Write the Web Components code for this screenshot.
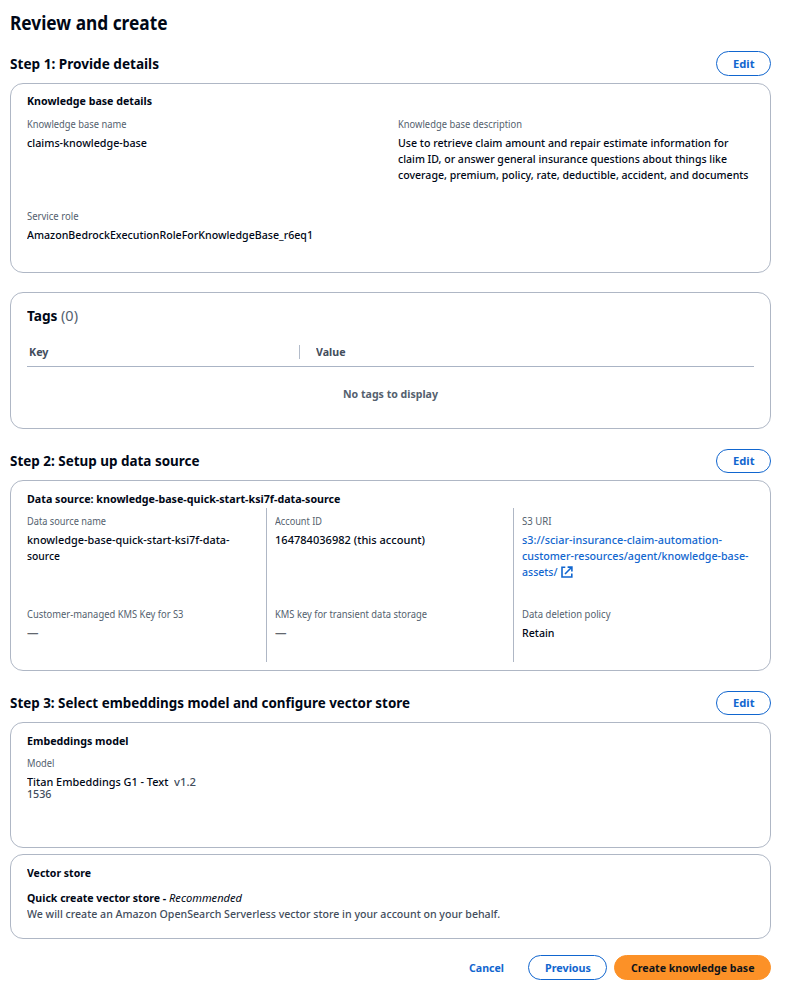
<!DOCTYPE html>
<html lang="en">
<head>
<meta charset="utf-8">
<title>Review and create</title>
<style>
body{margin:0;background:#fff;color:#000716;font-family:"Noto Sans","Open Sans",sans-serif;font-size:11.4px;line-height:16px}
</style>
</head>
<body>
<kb-review></kb-review>
<script>
// One line of text, condensed horizontally to span the width in "w".
customElements.define('kb-t', class extends HTMLElement{
  connectedCallback(){
    if(this.shadowRoot) return;
    this.attachShadow({mode:'open'}).innerHTML='<style>:host{display:inline-block;white-space:pre;text-align:left}span{display:inline-block;transform-origin:0 50%}</style><span><slot></slot></span>';
    const w=parseFloat(this.getAttribute('w'));
    if(w){
      const s=this.shadowRoot.querySelector('span'), natural=s.getBoundingClientRect().width;
      this.style.width=w+'px';
      s.style.transform='scaleX('+(w/natural).toFixed(4)+')';
    }
  }
});
const define=(name,html)=>customElements.define(name,class extends HTMLElement{
  connectedCallback(){ if(!this.shadowRoot) this.attachShadow({mode:'open'}).innerHTML=html; }
});
define('kb-button',`<style>
:host{display:flex;align-items:center;justify-content:center;box-sizing:border-box;width:var(--w,55px);height:var(--h,24px);border:1.5px solid #1166cf;border-radius:13px;color:#1166cf;font-weight:700;flex:none}
:host([variant=primary]){background:#fc9127;border-color:#fc9127;color:#0f141a}
:host([variant=link]){border-color:transparent}
</style><slot></slot>`);
define('kb-step',`<style>
:host{display:flex;justify-content:space-between;align-items:flex-start}
h2{margin:0;font-size:14.6px;line-height:24px;font-weight:700}
</style><h2><slot></slot></h2><slot name="action"></slot>`);
define('kb-card',`<style>
:host{display:flex;flex-direction:column;box-sizing:border-box;border:1px solid #afb7c5;border-radius:13px;padding:10px 16px 0}
::slotted([slot=title]){font-weight:700;height:16px;line-height:16px}
</style><slot name="title"></slot><slot></slot>`);
define('kb-field',`<style>
:host{display:block}
.l{font-size:10px;line-height:12px;height:12px;color:#545f6e;margin-bottom:5px;font-weight:400}
.v{line-height:16px;font-weight:500}
::slotted(*){vertical-align:top}
</style><div class="l"><slot name="label"></slot></div><div class="v"><slot></slot></div>`);
define('kb-external',`<style>:host{display:inline-block;width:12px;height:12px;margin-left:3.5px;padding-top:2px}svg{display:block}</style>
<svg width="12" height="12" viewBox="0 0 12 12" fill="none" stroke="currentColor" stroke-width="1.6"><path d="M4.3 1.25H1V11H10.8V7.6M6.6 1.1H10.9V5.4M10.7 1.3L4 8"/></svg>`);
define('kb-tags',`<style>
:host{display:flex;flex-direction:column}
.t{font-size:14.6px;line-height:24px;font-weight:700;height:24px;margin-bottom:17px}
.t span{font-weight:400;color:#545f6e}
.h{display:grid;grid-template-columns:273px 1fr;border-bottom:1px solid #aab4c5;padding-bottom:6px;color:#424d5c;font-weight:700;height:16px}
.h div:first-child{border-right:1px solid #b3bcca;height:14px;margin-top:1px;padding-left:2px;line-height:14px}
.h div:last-child{padding-left:16px}
.e{margin-top:19px;text-align:center;font-weight:700;color:#545f6e}
</style>
<div class="t"><kb-t w="34">Tags </kb-t><span><kb-t w="17">(0)</kb-t></span></div>
<div class="h"><div><kb-t w="19.5">Key</kb-t></div><div><kb-t w="29.5">Value</kb-t></div></div>
<div class="e"><kb-t w="95">No tags to display</kb-t></div>`);
define('kb-review',`<style>
:host{display:flex;flex-direction:column;width:761px;padding:9px 0 0 10px}
h1{margin:0 0 14px;font-size:19px;line-height:28px;height:28px;font-weight:700}
kb-step{height:24px}
.c1{margin-top:8px;height:190px;padding-top:9px}
.c2{margin-top:19px;height:137px}
.s2{margin-top:19px}.c3{margin-top:8px;height:191px}
.s3{margin-top:19px}.c4{margin-top:8px;height:126px}
.s2 kb-button,.s3 kb-button{margin-top:1px}
.c5{margin-top:6px;height:85px}
.two{display:grid;grid-template-columns:371px 1fr;grid-template-rows:65px auto;row-gap:27px;margin-top:9px}
.three{display:grid;grid-template-columns:239px 247px 1fr;height:154px;margin-top:1px}
.col{display:flex;flex-direction:column;gap:28px;padding-top:7px;box-sizing:border-box}
.col+.col{border-left:1px solid #afb7c5;padding-left:8px}
.col kb-field:first-child{height:65px}
a{color:#1166cf;text-decoration:none;display:block}
a div{display:flex;height:16px}
.d{color:#62676e;font-weight:700}
.m{margin-top:8px}.m div{display:flex;line-height:12px;height:12px;color:#424d5c}.m div:nth-of-type(1){padding-top:2px}
.m b{font-weight:500;color:#000716}
.q{margin-top:9px;font-weight:500;color:#424d5c}.q b,.q i{color:#000716;font-weight:700}.q i{font-weight:400}
.q div{height:16px}
footer{display:flex;justify-content:flex-end;margin-top:16px;--h:25px}
</style>
<h1><kb-t w="157.5">Review and create</kb-t></h1>
<kb-step><kb-t w="149">Step 1: Provide details</kb-t><kb-button slot="action" style="--h:25px"><kb-t w="21.5">Edit</kb-t></kb-button></kb-step>
<kb-card class="c1"><div slot="title"><kb-t w="125">Knowledge base details</kb-t></div>
<div class="two">
<kb-field><kb-t slot="label" w="99.5">Knowledge base name</kb-t><kb-t w="120">claims-knowledge-base</kb-t></kb-field>
<kb-field><kb-t slot="label" w="124">Knowledge base description</kb-t><kb-t w="330.5">Use to retrieve claim amount and repair estimate information for</kb-t><br><kb-t w="329">claim ID, or answer general insurance questions about things like</kb-t><br><kb-t w="350.5">coverage, premium, policy, rate, deductible, accident, and documents</kb-t></kb-field>
<kb-field><kb-t slot="label" w="51.5">Service role</kb-t><kb-t w="286">AmazonBedrockExecutionRoleForKnowledgeBase_r6eq1</kb-t></kb-field>
</div></kb-card>
<kb-card class="c2"><kb-tags></kb-tags></kb-card>
<kb-step class="s2"><kb-t w="189.5">Step 2: Setup up data source</kb-t><kb-button slot="action"><kb-t w="21.5">Edit</kb-t></kb-button></kb-step>
<kb-card class="c3"><div slot="title"><kb-t w="313.5">Data source: knowledge-base-quick-start-ksi7f-data-source</kb-t></div>
<div class="three">
<div class="col"><kb-field><kb-t slot="label" w="79">Data source name</kb-t><kb-t w="202.5">knowledge-base-quick-start-ksi7f-data-</kb-t><br><kb-t w="33">source</kb-t></kb-field>
<kb-field><kb-t slot="label" w="156.5">Customer-managed KMS Key for S3</kb-t><kb-t class="d" w="11.5">—</kb-t></kb-field></div>
<div class="col"><kb-field><kb-t slot="label" w="47">Account ID</kb-t><kb-t w="150">164784036982 (this account)</kb-t></kb-field>
<kb-field><kb-t slot="label" w="152">KMS key for transient data storage</kb-t><kb-t class="d" w="11.5">—</kb-t></kb-field></div>
<div class="col"><kb-field><kb-t slot="label" w="29.5">S3 URI</kb-t><a><div><kb-t w="200">s3://sciar-insurance-claim-automation-</kb-t></div><div><kb-t w="226.5">customer-resources/agent/knowledge-base-</kb-t></div><div><kb-t w="35.5">assets/</kb-t><kb-external></kb-external></div></a></kb-field>
<kb-field><kb-t slot="label" w="88.5">Data deletion policy</kb-t><kb-t w="32.5">Retain</kb-t></kb-field></div>
</div></kb-card>
<kb-step class="s3"><kb-t w="400">Step 3: Select embeddings model and configure vector store</kb-t><kb-button slot="action"><kb-t w="21.5">Edit</kb-t></kb-button></kb-step>
<kb-card class="c4"><div slot="title"><kb-t w="101.5">Embeddings model</kb-t></div>
<kb-field class="m"><kb-t slot="label" w="27.5">Model</kb-t><div><b><kb-t w="147">Titan Embeddings G1 - Text  </kb-t></b><kb-t w="22">v1.2</kb-t></div><div><kb-t w="24.5">1536</kb-t></div></kb-field></kb-card>
<kb-card class="c5"><div slot="title"><kb-t w="64">Vector store</kb-t></div>
<div class="q"><div><b><kb-t w="142">Quick create vector store - </kb-t></b><i><kb-t w="73">Recommended</kb-t></i></div><div><kb-t w="473">We will create an Amazon OpenSearch Serverless vector store in your account on your behalf.</kb-t></div></div></kb-card>
<footer><kb-button variant="link" style="--w:70px;margin-right:7px"><kb-t w="35">Cancel</kb-t></kb-button><kb-button style="--w:79px;margin-right:7px"><kb-t w="46">Previous</kb-t></kb-button><kb-button variant="primary" style="--w:157px"><kb-t w="123.5">Create knowledge base</kb-t></kb-button></footer>`);
</script>
</body>
</html>
